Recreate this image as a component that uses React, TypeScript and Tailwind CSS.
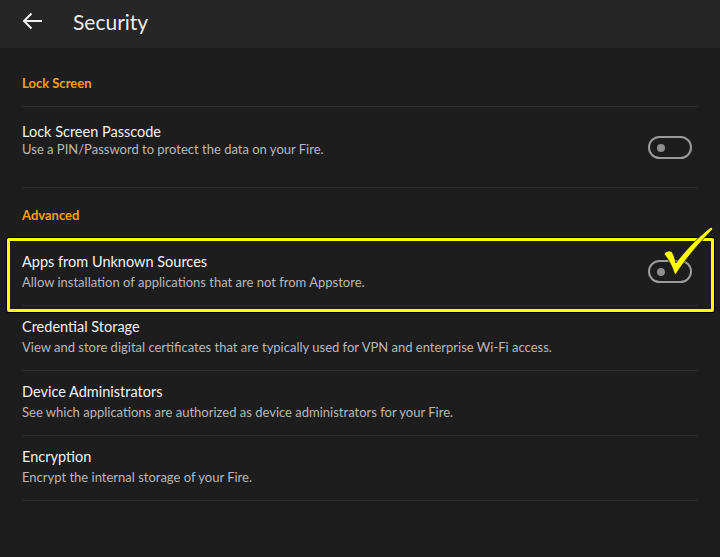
import React from 'react';

type Item = {
  title: string;
  subtitle: string;
  toggle?: boolean;
  highlight?: boolean;
};

const advancedItems: Item[] = [
  {
    title: 'Apps from Unknown Sources',
    subtitle: 'Allow installation of applications that are not from Appstore.',
    toggle: true,
    highlight: true,
  },
  {
    title: 'Credential Storage',
    subtitle: 'View and store digital certificates that are typically used for VPN and enterprise Wi-Fi access.',
  },
  {
    title: 'Device Administrators',
    subtitle: 'See which applications are authorized as device administrators for your Fire.',
  },
  {
    title: 'Encryption',
    subtitle: 'Encrypt the internal storage of your Fire.',
  },
];

const Toggle: React.FC = () => (
  <div className="w-[44px] h-[23px] rounded-full border-2 border-[#9b9b9b] flex items-center pl-[7px] shrink-0">
    <div className="w-[8px] h-[8px] rounded-full bg-[#8e8e8e]" />
  </div>
);

// hand-drawn annotation tick over the toggle
const CheckMark: React.FC = () => (
  <svg
    className="absolute left-[645px] top-[-18px] pointer-events-none"
    width="62"
    height="56"
    viewBox="0 0 62 56"
  >
    <path
      d="M9 31 C11 28 15 27 17 29 C19 32 20 36 21 40 C29 29 42 15 56 4 L58 6 C46 18 34 32 25 45 C23 48 21 51 20 52 C18 46 15 38 9 31 Z"
      fill="#ffff00"
      stroke="#1a1a1a"
      strokeWidth="0.8"
      strokeLinejoin="round"
    />
  </svg>
);

const SectionLabel: React.FC<{ label: string; className?: string }> = ({ label, className }) => (
  <div className={`text-[13px] leading-[18px] font-bold text-[#f5a20a] ${className ?? ''}`}>
    {label}
  </div>
);

const Row: React.FC<{ item: Item }> = ({ item }) => (
  <div className="relative flex items-center justify-between border-b border-[#2c2c2c] pt-[11px] pb-[14px]">
    <div className="min-w-0">
      <div className="text-[14.5px] leading-[20px] text-[#f2f2f2]">{item.title}</div>
      <div className="mt-[1px] text-[13px] leading-[18px] text-[#b8b8b8]">{item.subtitle}</div>
    </div>
    {item.toggle && (
      <div className="mr-[6px]">
        <Toggle />
      </div>
    )}
    {item.highlight && (
      <div className="absolute left-[-15px] right-[-16px] top-[-3px] bottom-[-7px] border-[3px] border-[#ffff00] rounded-[2px] ring-1 ring-black pointer-events-none">
        <CheckMark />
      </div>
    )}
  </div>
);

export default function App() {
  return (
    <div
      className="w-[720px] h-[557px] bg-[#1d1d1d] overflow-hidden"
      style={{ fontFamily: 'Lato, "Open Sans", sans-serif' }}
    >
      {/* Header */}
      <div className="h-[48px] bg-[#262626] flex items-center pb-[6px]">
        <svg className="ml-[22px]" width="21" height="18" viewBox="0 0 21 18" fill="none">
          <path d="M20 9H2 M9.5 1.5 L2 9 L9.5 16.5" stroke="#f0f0f0" strokeWidth="2" />
        </svg>
        <div className="ml-[30px] text-[21px] leading-none text-[#ededed]">Security</div>
      </div>

      <div className="px-[22px]">
        {/* Lock Screen */}
        <div className="border-b border-[#2c2c2c] pt-[26px] pb-[14px]">
          <SectionLabel label="Lock Screen" />
        </div>
        <div className="flex items-start justify-between border-b border-[#2c2c2c] pt-[16px] pb-[30px]">
          <div>
            <div className="text-[14.5px] leading-[18px] text-[#f2f2f2]">Lock Screen Passcode</div>
            <div className="text-[13px] leading-[16px] text-[#b8b8b8]">
              Use a PIN/Password to protect the data on your Fire.
            </div>
          </div>
          <div className="mr-[6px] mt-[13px] h-0">
            <Toggle />
          </div>
        </div>

        {/* Advanced */}
        <SectionLabel label="Advanced" className="pt-[18px] pb-[17px]" />
        {advancedItems.map((item) => (
          <Row key={item.title} item={item} />
        ))}
      </div>
    </div>
  );
}
